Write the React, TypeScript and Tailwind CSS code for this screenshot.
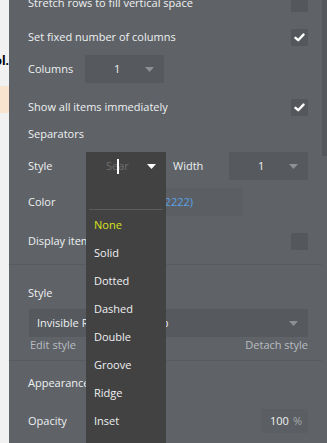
import React from "react";

const Check = () => (
  <div className="w-[17px] h-[17px] bg-[#54585c] rounded-[1px] flex items-center justify-center">
    <svg width="11" height="9" viewBox="0 0 11 9">
      <path d="M1.5 4.8 L4.2 7.2 L9.5 1.6" stroke="#ffffff" strokeWidth="2.4" fill="none" strokeLinecap="round" strokeLinejoin="round" />
    </svg>
  </div>
);
const Empty = () => <div className="w-[17px] h-[17px] bg-[#54585c] rounded-[1px]" />;
const Arrow = ({ c = "#8d9195" }: { c?: string }) => (
  <svg width="9" height="5" viewBox="0 0 9 5">
    <path d="M0 0 L9 0 L4.5 5 Z" fill={c} />
  </svg>
);

export default function App() {
  const opts = ["Solid", "Dotted", "Dashed", "Double", "Groove", "Ridge", "Inset"];
  return (
    <div
      className="relative w-[327px] h-[443px] overflow-hidden flex text-[11px] text-[#eef0f2]"
      style={{ fontFamily: '"Open Sans", "Noto Sans", sans-serif' }}
    >
      {/* left page strip */}
      <div className="w-[9px] flex flex-col bg-[#f1f1f1] overflow-hidden">
        <div className="h-[86px] flex flex-col justify-end">
          <div className="h-[24px] mb-[13px] flex justify-end items-center whitespace-nowrap text-black font-bold text-[12px]">ol.</div>
        </div>
        <div className="h-[27px] bg-[#f9e4d0]" />
        <div className="flex-1" />
      </div>

      {/* panel */}
      <div className="flex-1 bg-[#5f6367] flex flex-col">
        <div className="pl-[19px] pr-[14px] flex flex-col">
          <div className="mt-[-11px] h-[28px] flex items-center justify-between">
            <span>Stretch rows to fill vertical space</span>
            <Empty />
          </div>
          <div className="mt-[6px] h-[28px] flex items-center justify-between">
            <span>Set fixed number of columns</span>
            <Check />
          </div>
          <div className="mt-[4px] h-[28px] flex items-center">
            <span className="w-[57px]">Columns</span>
            <div className="w-[79px] h-[28px] bg-[#565a5e] flex items-center pl-[29px] pr-[10px] justify-between">
              <span>1</span>
              <Arrow />
            </div>
          </div>
          <div className="mt-[10px] h-[28px] flex items-center justify-between">
            <span>Show all items immediately</span>
            <Check />
          </div>
          <div className="mt-[3px] h-[20px] flex items-center">Separators</div>
          <div className="mt-[8px] h-[28px] flex items-center">
            <span className="w-[58px]">Style</span>
            <div className="w-[80px]" />
            <span className="ml-[7px] w-[56px]">Width</span>
            <div className="w-[79px] h-[28px] bg-[#565a5e] flex items-center pl-[29px] pr-[10px] justify-between">
              <span>1</span>
              <Arrow />
            </div>
          </div>
          <div className="mt-[8px] h-[28px] flex items-center">
            <span className="w-[58px]">Color</span>
            <div className="w-[157px] h-[28px] bg-[#5b5f63] flex items-center overflow-hidden">
              <span className="w-[107px] text-right whitespace-nowrap text-[#5aa2ea] overflow-hidden">rgb(#222222)</span>
            </div>
          </div>
          <div className="mt-[11px] h-[28px] flex items-center justify-between">
            <span>Display items as a grid</span>
            <Empty />
          </div>
        </div>
        <div className="mt-[9px] h-px bg-[#575b5f]" />
        <div className="pl-[19px] pr-[14px] flex flex-col">
          <div className="mt-[18px] h-[20px] flex items-center">Style</div>
          <div className="mt-[6px] ml-px h-[28px] bg-[#565a5e] flex items-center pl-[8px] pr-[10px] justify-between">
            <span>Invisible Repeating Group</span>
            <Arrow />
          </div>
          <div className="h-[16px] flex items-center justify-between text-[#b9bdc1] pl-[2px]">
            <span>Edit style</span>
            <span>Detach style</span>
          </div>
        </div>
        <div className="mt-[7px] h-px bg-[#575b5f]" />
        <div className="pl-[19px] pr-[14px] flex flex-col">
          <div className="mt-[12px] h-[20px] flex items-center">Appearance</div>
          <div className="mt-[16px] h-[24px] flex items-center justify-between">
            <span>Opacity</span>
            <div className="w-[47px] h-[24px] bg-[#5b5f63] flex items-center justify-end pr-[6px]">
              <span>100</span>
              <span className="ml-[4px] text-[#a4a8ac]">%</span>
            </div>
          </div>
        </div>
      </div>

      {/* scrollbar */}
      <div className="w-[5px] flex flex-col bg-[#5f6367]">
        <div className="h-[156px] bg-[#54585c]" />
      </div>

      {/* dropdown popup */}
      <div className="absolute left-[86px] top-[152px] w-[80px] h-[300px] bg-[#424242] flex flex-col">
        <div className="h-[28px] flex items-center pl-[20px] pr-[10px] justify-between relative">
          <span className="text-[#6e6e6e]">Sear</span>
          <div className="absolute left-[31px] top-[7px] w-[2px] h-[15px] bg-white" />
          <Arrow c="#ffffff" />
        </div>
        <div className="mt-[29px] mx-[3px] h-px bg-[#5c5c5c]" />
        <div className="mt-[1px] pl-[8px] flex flex-col">
          <div className="h-[28px] flex items-center text-[#d7e21c]">None</div>
          {opts.map((o) => (
            <div key={o} className="h-[28px] flex items-center">{o}</div>
          ))}
        </div>
      </div>
    </div>
  );
}
